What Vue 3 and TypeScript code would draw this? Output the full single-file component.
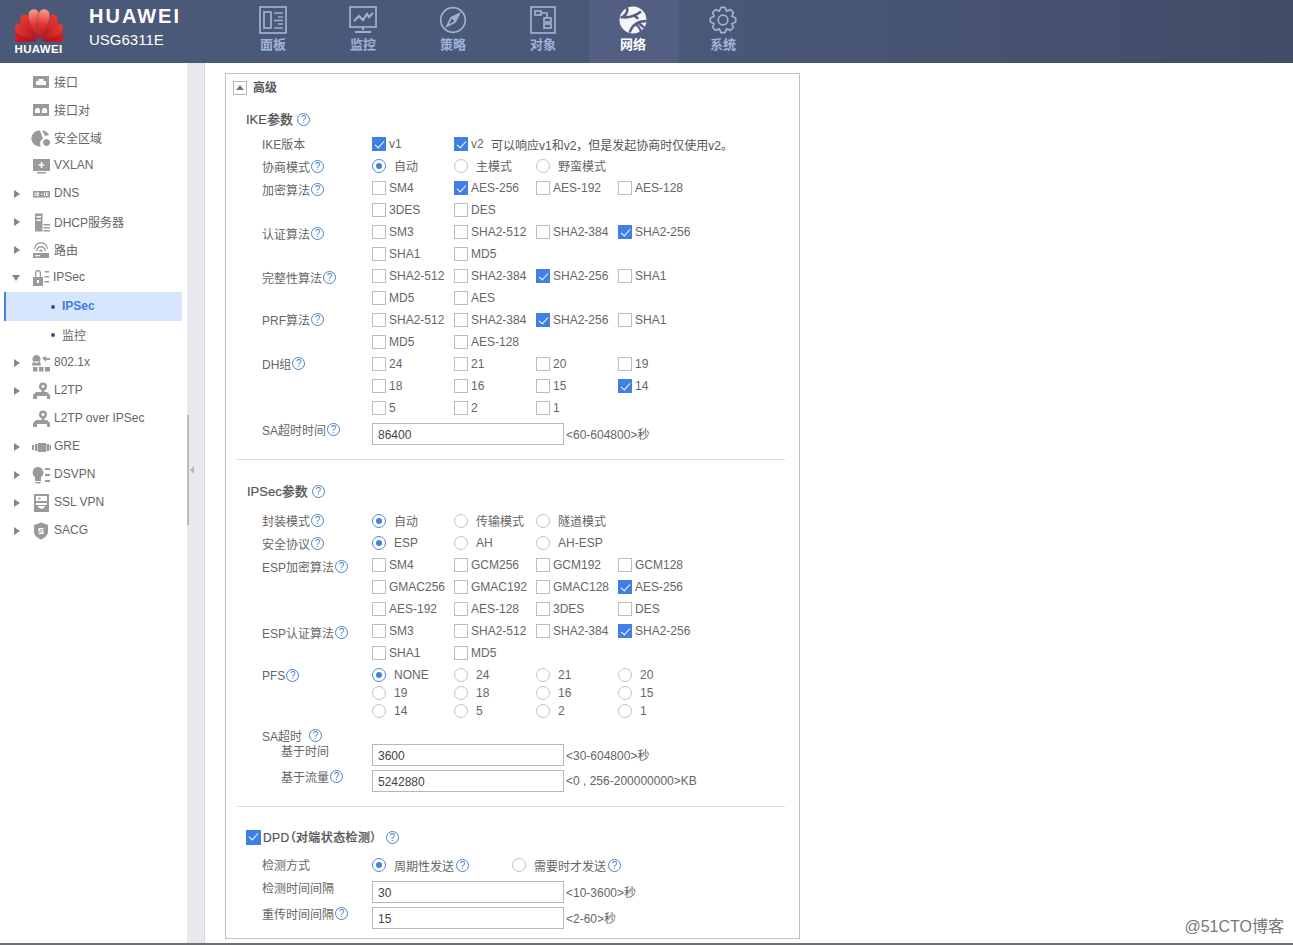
<script setup lang="ts">
type Item = { t: string; on: boolean; help?: boolean }
type Row = {
  label?: string
  help?: boolean
  h: number
  mt: number
  kind: 'c' | 'r' | 'i' | 'l'
  items?: Item[]
  value?: string
  suffix?: string
  note?: string
  cls?: string
}

const parse = (s: string): Item[] =>
  s.split(' ').map((x) => ({ t: x.replace('*', ''), on: x.includes('*') }))

const ck = (label: string | undefined, s: string, cls = ''): Row => ({ label, help: !!label, h: 22, mt: 0, kind: 'c', items: parse(s), cls })
const rd = (label: string | undefined, s: string, h = 22, mt = 0, cls = ''): Row => ({ label, help: !!label, h, mt, kind: 'r', items: parse(s), cls })
const inp = (label: string, help: boolean, value: string, suffix: string, mt: number, cls = ''): Row => ({ label, help, h: 22, mt, kind: 'i', value, suffix, cls })

const ike: Row[] = [
  { label: 'IKE版本', help: false, h: 22, mt: 0, kind: 'c', items: parse('v1* v2*'), note: '可以响应v1和v2，但是发起协商时仅使用v2。', cls: 'flat' },
  rd('协商模式', '自动* 主模式 野蛮模式', 22, 0, 'up'),
  ck('加密算法', 'SM4 AES-256* AES-192 AES-128'),
  ck(undefined, '3DES DES'),
  ck('认证算法', 'SM3 SHA2-512 SHA2-384 SHA2-256*'),
  ck(undefined, 'SHA1 MD5'),
  ck('完整性算法', 'SHA2-512 SHA2-384 SHA2-256* SHA1'),
  ck(undefined, 'MD5 AES'),
  ck('PRF算法', 'SHA2-512 SHA2-384 SHA2-256* SHA1', 'flat'),
  ck(undefined, 'MD5 AES-128'),
  ck('DH组', '24 21 20 19', 'flat'),
  ck(undefined, '18 16 15 14*'),
  ck(undefined, '5 2 1'),
  inp('SA超时时间', true, '86400', '<60-604800>秒', 4),
]

const ipsec: Row[] = [
  rd('封装模式', '自动* 传输模式 隧道模式', 22, 0, 'flat up'),
  rd('安全协议', 'ESP* AH AH-ESP'),
  ck('ESP加密算法', 'SM4 GCM256 GCM192 GCM128'),
  ck(undefined, 'GMAC256 GMAC192 GMAC128 AES-256*'),
  ck(undefined, 'AES-192 AES-128 3DES DES'),
  ck('ESP认证算法', 'SM3 SHA2-512 SHA2-384 SHA2-256*'),
  ck(undefined, 'SHA1 MD5'),
  rd('PFS', 'NONE* 24 21 20', 18, 2),
  rd(undefined, '19 18 16 15', 18),
  rd(undefined, '14 5 2 1', 18),
  { label: 'SA超时', help: true, h: 18, mt: 6, kind: 'l', cls: 'wide-help' },
  inp('基于时间', false, '3600', '<30-604800>秒', 0, 'indent'),
  inp('基于流量', true, '5242880', '<0 , 256-200000000>KB', 4, 'indent'),
]

const dpd: Row[] = [
  {
    label: '检测方式',
    help: false,
    h: 22,
    mt: 0,
    kind: 'r',
    cls: 'wide-cell flat',
    items: [
      { t: '周期性发送', on: true, help: true },
      { t: '需要时才发送', on: false, help: true },
    ],
  },
  inp('检测时间间隔', false, '30', '<10-3600>秒', 5),
  inp('重传时间间隔', true, '15', '<2-60>秒', 4),
]

const sections = [
  { title: 'IKE参数', rows: ike, cls: 'first', check: false },
  { title: 'IPSec参数', rows: ipsec, cls: 'second', check: false },
  { title: 'DPD（对端状态检测）', rows: dpd, cls: 'third', check: true },
]

const nav = [
  { t: '面板', k: 'board' },
  { t: '监控', k: 'monitor' },
  { t: '策略', k: 'policy' },
  { t: '对象', k: 'object' },
  { t: '网络', k: 'network', active: true },
  { t: '系统', k: 'system' },
]

const gearPath = (() => {
  const cx = 14, cy = 14, n = 8
  const pts: string[] = []
  for (let i = 0; i < n; i++) {
    const a = (i * 2 * Math.PI) / n - Math.PI / 2
    const step = (2 * Math.PI) / n
    const seq: [number, number][] = [
      [9.6, a - step * 0.5],
      [12.8, a - step * 0.2],
      [12.8, a + step * 0.2],
      [9.6, a + step * 0.5],
    ]
    for (const [r, t] of seq) pts.push(`${(cx + r * Math.cos(t)).toFixed(2)} ${(cy + r * Math.sin(t)).toFixed(2)}`)
  }
  return 'M' + pts.join('L') + 'Z'
})()

const petals = [
  { r: -80, s: 0.86, c: 'url(#petalLow)' },
  { r: 80, s: 0.86, c: 'url(#petalLow)' },
  { r: -57, s: 0.94, c: 'url(#petalMid)' },
  { r: 57, s: 0.94, c: 'url(#petalMid)' },
  { r: -33, s: 1.02, c: 'url(#petalMid)' },
  { r: 33, s: 1.02, c: 'url(#petalMid)' },
  { r: -11, s: 1.08, c: 'url(#petalTop)' },
  { r: 11, s: 1.08, c: 'url(#petalTop)' },
]

const icons: Record<string, string> = {
  port: 'M2 4h16v12H2zM5 13h10V9h-2.500V7h-5v2H5z',
  pair: 'M2 4h16v12H2zM4 13h5v-3L8 8H5L4 10zM11 13h5v-3l-1-2h-3l-1 2z',
  zone: 'M9 2.500a8 8 0 1 0 1 15.800 5.500 5.500 0 0 1 2-7.800zM11 2.500 14 8l4-1a8 8 0 0 0-7-4.500zM15.500 11a3.500 3.500 0 1 0 .01 0z',
  vxlan: 'M2 3h17v12H2zM9.700 6v2.200H7.500v1.600h2.200V12h1.600V9.800h2.200V8.200h-2.200V6zM6 16h9v1.500H6z',
  dns: 'M2 7h17v6.500H2zM3.500 8.500v3.500h1V8.500zM5.500 8.500v3.500h2.500v-1H6.500v-.7H8V8.500zM10 9.800v1h1.500v-1zM13 8.500v3.500h1V8.500zM15 8.500v3.500h2.500v-1H16V9.500h1.500v-1z',
  dhcp: 'M4 1.500h7.500v18H4zM5.500 4v1.500h4.500V4zM5.500 7.500v1.500h4.500V7.500zM12.500 12h6.500v1.500h-6.500zM12.500 15h6.500v1.500h-6.500zM12.500 18h6.500v1.500h-6.500z',
  route: 'M2 13h16v5H2zM4 15.200v1h5v-1zM5 11a5 5 0 0 1 10 0h-1.500a3.500 3.500 0 0 0-7 0zM3 9a7 7 0 0 1 14 0h-1.300a5.700 5.700 0 0 0-11.400 0zM8 11.500a2 2 0 0 1 4 0z',
  lock: 'M3 9h10v9H3zM5 9V5a3 3 0 0 1 6 0v4H9.700V5a1.700 1.700 0 0 0-3.400 0v4zM7 12v3h2v-3zM14.500 3H19v1.500h-4.500zM14.500 8H19v1.500h-4.500zM14.500 13H19v1.500h-4.500z',
  dot1x: 'M5.500 2a4 4 0 1 1-.01 0zM2 8.500h7l1 4H1zM11 5l4-2v2h4v2h-4v2zM2 14h4.500v4.500H2zM8 14h4.500v4.500H8zM14 14h5v4.500h-5z',
  l2tp: 'M12 1.500a4 4 0 0 1 1.500 7.700V11H16l3 3v4h-3v-3H6v3H2v-4l3-3h5.500V9.200A4 4 0 0 1 12 1.500zM12 4a1.500 1.500 0 1 0 .01 0z',
  gre: 'M1 8h2v5H1zM4 7h2.500v7H4zM7 6h8v9H7zM15.500 7H18v7h-2.500zM18.500 8h1.500v5h-1.500z',
  dsvpn: 'M7 2a5.500 5.500 0 0 1 3 10v4H4v-4A5.500 5.500 0 0 1 7 2zM4.500 17h5v1.500h-5zM14 3h5v2h-5zM14 9h5v2h-5zM14 15h5v2h-5z',
  ssl: 'M3 1h15v18H3zM5 3v5h11V3zM7.500 4.500h2v2h-2zM5 10v2h11v-2zM7 14l3.500 2 3.500-2v-1H7z',
  sacg: 'M10 1.500 17 4v6.500c0 4-3.500 6.500-7 8-3.500-1.500-7-4-7-8V4zM7.500 7v3.500h3.500v1H7.500V13H12.500V9.500H9V8.500h3.500V7z',
}

const menu = [
  { t: '接口', i: 'port' },
  { t: '接口对', i: 'pair' },
  { t: '安全区域', i: 'zone' },
  { t: 'VXLAN', i: 'vxlan' },
  { t: 'DNS', i: 'dns', caret: 'r' },
  { t: 'DHCP服务器', i: 'dhcp', caret: 'r' },
  { t: '路由', i: 'route', caret: 'r' },
  { t: 'IPSec', i: 'lock', caret: 'd' },
  { t: 'IPSec', sub: true, active: true },
  { t: '监控', sub: true },
  { t: '802.1x', i: 'dot1x', caret: 'r' },
  { t: 'L2TP', i: 'l2tp', caret: 'r' },
  { t: 'L2TP over IPSec', i: 'l2tp' },
  { t: 'GRE', i: 'gre', caret: 'r' },
  { t: 'DSVPN', i: 'dsvpn', caret: 'r' },
  { t: 'SSL VPN', i: 'ssl', caret: 'r' },
  { t: 'SACG', i: 'sacg', caret: 'r' },
]
</script>

<template>
  <div class="page">
    <header class="topbar">
      <div class="logo">
        <svg class="logo-mark" viewBox="0 0 48 36" width="48" height="36">
          <defs>
            <linearGradient id="petalTop" x1="0" y1="0" x2="0" y2="1">
              <stop offset="0" stop-color="#f7a08c" />
              <stop offset="0.5" stop-color="#e8322c" />
              <stop offset="1" stop-color="#c00d14" />
            </linearGradient>
            <linearGradient id="petalMid" x1="0" y1="0" x2="0" y2="1">
              <stop offset="0" stop-color="#ee3a30" />
              <stop offset="1" stop-color="#b80b12" />
            </linearGradient>
            <linearGradient id="petalLow" x1="0" y1="0" x2="0" y2="1">
              <stop offset="0" stop-color="#dc1c1f" />
              <stop offset="1" stop-color="#a80a10" />
            </linearGradient>
          </defs>
          <g v-for="(p, i) in petals" :key="i" :transform="`translate(24 35) rotate(${p.r}) scale(${p.s})`">
            <path d="M0 -1C-1.500 -9 -8.500 -19 -4.500 -27.500C-2.500 -31 2.500 -31 4.500 -27.500C8.500 -19 1.500 -9 0 -1Z" :fill="p.c" stroke="#4b5979" stroke-width="0.500" />
          </g>
        </svg>
        <span class="logo-word">HUAWEI</span>
      </div>
      <div class="device">
        <div class="brand">HUAWEI</div>
        <div class="model">USG6311E</div>
      </div>
      <nav class="nav">
        <div v-for="n in nav" :key="n.k" class="nav-item" :class="{ active: n.active }">
          <svg class="nav-icon" viewBox="0 0 28 28" width="28" height="28" fill="none" stroke="currentColor" stroke-width="1.700">
            <template v-if="n.k === 'board'">
              <rect x="1" y="1" width="26" height="26" />
              <rect x="5" y="6" width="7" height="16" />
              <path d="M15 7h9M19 11h5M15 14.500h9M19 18h5M15 22h9" />
            </template>
            <template v-else-if="n.k === 'monitor'">
              <rect x="1" y="1" width="26" height="20" />
              <path d="M5 15l5-5 4 4 4-6 2 3 4-4" stroke-width="2.200" />
              <path d="M14 21v3M6 26h16" stroke-width="2.200" />
            </template>
            <template v-else-if="n.k === 'policy'">
              <circle cx="14" cy="14" r="12.300" />
              <path d="M20 8 16 16 8 20 12 12Z" />
              <path d="M20 8 12 12 16 16Z" fill="currentColor" stroke="none" />
            </template>
            <template v-else-if="n.k === 'object'">
              <rect x="2" y="1" width="24" height="26" />
              <rect x="6" y="5" width="6" height="4" />
              <rect x="15" y="12" width="7" height="4" />
              <rect x="15" y="18" width="7" height="4" />
              <path d="M12 7h6v5" />
            </template>
            <template v-else-if="n.k === 'network'">
              <circle cx="14" cy="14" r="13.500" fill="#f4f5f8" stroke="none" />
              <path d="M8 1.500C9 5 8 8 4 10.500M1.500 11C8 12 15 11 22 5.500M14 9c2 1 4 2 5 4" stroke="#535f82" stroke-width="2.600" />
              <path d="M27.500 15C21 15 14 17 10.500 26.500M16 18c2 1 5 4 6 8M19 16.500l6 5" stroke="#535f82" stroke-width="2.300" />
            </template>
            <template v-else>
              <path :d="gearPath" stroke-linejoin="round" />
              <circle cx="14" cy="14" r="4.800" />
            </template>
          </svg>
          <span class="nav-text">{{ n.t }}</span>
        </div>
      </nav>
    </header>

    <main class="body">
      <aside class="sidebar">
        <div v-for="(m, i) in menu" :key="i" class="menu-row" :class="{ sub: m.sub, active: m.active }">
          <template v-if="m.sub">
            <span class="bullet"></span>
            <span class="menu-text">{{ m.t }}</span>
          </template>
          <template v-else>
            <span class="caret" :class="m.caret"></span>
            <svg class="menu-icon" viewBox="0 0 20 20" width="20" height="20">
              <path :d="icons[m.i as string]" fill="#9a9a9a" fill-rule="evenodd" />
            </svg>
            <span class="menu-text">{{ m.t }}</span>
          </template>
        </div>
      </aside>

      <div class="splitter">
        <span class="thumb"></span>
        <span class="grip"></span>
      </div>

      <section class="content">
        <div class="panel">
          <div class="panel-head">
            <span class="toggle"></span>
            <span class="panel-title">高级</span>
          </div>

          <div v-for="s in sections" :key="s.title" class="section" :class="s.cls">
            <div class="sec-title">
              <span v-if="s.check" class="box big on"></span>
              <span class="sec-text">{{ s.title }}</span>
              <span class="help sec-help">?</span>
            </div>

            <div
              v-for="(r, ri) in s.rows"
              :key="ri"
              class="row"
              :class="[r.cls, 'kind-' + r.kind]"
              :style="{ height: r.h + 'px', marginTop: r.mt + 'px' }"
            >
              <div class="label">
                <span>{{ r.label }}</span>
                <span v-if="r.help" class="help">?</span>
              </div>
              <template v-if="r.kind === 'i'">
                <div class="input">{{ r.value }}</div>
                <span class="suffix">{{ r.suffix }}</span>
              </template>
              <template v-else-if="r.items">
                <div v-for="it in r.items" :key="it.t" class="cell">
                  <span v-if="r.kind === 'c'" class="box" :class="{ on: it.on }"></span>
                  <span v-else class="radio" :class="{ on: it.on }"></span>
                  <span class="cell-text">{{ it.t }}</span>
                  <span v-if="it.help" class="help">?</span>
                </div>
                <span v-if="r.note" class="note">{{ r.note }}</span>
              </template>
            </div>
          </div>
        </div>
      </section>
    </main>
    <div class="footline"></div>
    <div class="watermark">@51CTO博客</div>
  </div>
</template>

<style>
html,
body {
  margin: 0;
  background: #fff;
}
</style>

<style scoped>
.page {
  position: relative;
  width: 1293px;
  height: 945px;
  overflow: hidden;
  display: flex;
  flex-direction: column;
  font-family: "Liberation Sans", "Noto Sans CJK SC", sans-serif;
  font-size: 12px;
  color: #555;
  background: #fff;
}

.topbar {
  height: 63px;
  flex: none;
  display: flex;
  background: linear-gradient(90deg, #4b5979 0%, #4b5979 50%, #414c68 100%);
}
.logo {
  width: 77px;
  flex: none;
  display: flex;
  flex-direction: column;
  align-items: center;
  box-sizing: border-box;
  padding-top: 6px;
}
.logo-mark {
  display: block;
}
.logo-word {
  margin-top: 1px;
  font-size: 11.500px;
  font-weight: 700;
  line-height: 12px;
  color: #fff;
  letter-spacing: 0.300px;
}
.device {
  width: 152px;
  flex: none;
  box-sizing: border-box;
  padding: 6px 0 0 12px;
  color: #fff;
}
.brand {
  font-size: 20px;
  font-weight: 700;
  letter-spacing: 2px;
  line-height: 20px;
}
.model {
  margin-top: 4px;
  font-size: 15px;
  line-height: 20px;
}
.nav {
  display: flex;
}
.nav-item {
  width: 90px;
  height: 63px;
  display: flex;
  flex-direction: column;
  align-items: center;
  box-sizing: border-box;
  padding: 6px 2px 0 0;
  color: #a2b0cd;
}
.nav-item.active {
  background: #535f82;
  color: #fff;
}
.nav-icon {
  display: block;
}
.nav-text {
  margin-top: 3px;
  font-size: 13px;
  line-height: 16px;
  font-weight: 700;
  color: #9fb3d8;
}
.nav-item.active .nav-text {
  color: #fff;
}

.body {
  flex: 1;
  min-height: 0;
  display: flex;
}
.sidebar {
  width: 187px;
  flex: none;
  box-sizing: border-box;
  padding: 5px 5px 0 4px;
}
.menu-row {
  height: 28px;
  display: flex;
  align-items: center;
  color: #666;
}
.menu-text {
  margin-top: -2px;
}
.caret {
  width: 9px;
  height: 0;
  margin-left: 8px;
  flex: none;
  box-sizing: border-box;
}
.caret.r {
  width: 0;
  margin-right: 9px;
  border-left: 6px solid #7f8a8a;
  border-top: 4.500px solid transparent;
  border-bottom: 4.500px solid transparent;
  margin-left: 10px;
}
.caret.d {
  width: 0;
  margin-right: 8px;
  border-top: 6px solid #7f8a8a;
  border-left: 4.500px solid transparent;
  border-right: 4.500px solid transparent;
  margin-left: 8px;
}
.menu-row .caret:not(.r):not(.d) {
  margin-right: 8px;
}
.menu-icon {
  flex: none;
  margin: 0 3px 0 2px;
}
.menu-row.sub {
  padding-left: 47px;
}
.menu-row.active {
  height: 29px;
  box-sizing: border-box;
  background: #d8e6fd;
  border-left: 2px solid #4a84e0;
  padding-left: 45px;
  color: #3f7be0;
  font-weight: 700;
}
.bullet {
  width: 4px;
  height: 4px;
  border-radius: 50%;
  background: #3d5273;
  margin-right: 7px;
}

.splitter {
  position: relative;
  width: 18px;
  flex: none;
  box-sizing: border-box;
  background: #e8e9ee;
  border-right: 1px solid #d5d6da;
}
.thumb {
  position: absolute;
  left: 0;
  top: 352px;
  width: 2px;
  height: 110px;
  background: #bcbcbc;
}
.grip {
  position: absolute;
  left: 3px;
  top: 403px;
  width: 0;
  height: 0;
  border-right: 4px solid #b5b8bf;
  border-top: 4px solid transparent;
  border-bottom: 4px solid transparent;
}

.content {
  flex: 1;
  padding: 10px 0 0 20px;
}
.panel {
  width: 575px;
  box-sizing: border-box;
  border: 1px solid #c2c2c2;
  padding-bottom: 9px;
}
.panel-head {
  height: 28px;
  display: flex;
  align-items: center;
  padding-left: 7px;
}
.toggle {
  position: relative;
  width: 14px;
  height: 14px;
  box-sizing: border-box;
  border: 1px solid #b5b5b5;
}
.toggle::after {
  content: "";
  position: absolute;
  left: 2px;
  top: 3px;
  border-bottom: 5px solid #777;
  border-left: 4px solid transparent;
  border-right: 4px solid transparent;
}
.panel-title {
  margin: -3px 0 0 6px;
  font-size: 12px;
  font-weight: 700;
  color: #555;
}

.section.second,
.section.third {
  margin: 14px 14px 0 11px;
  border-top: 1px solid #dcdcdc;
}
.section.second .row,
.section.third .row {
  margin-left: -11px;
}
.sec-title {
  height: 20px;
  margin: 7px 0 4px;
  padding-left: 20px;
  display: flex;
  align-items: center;
  font-size: 13px;
  color: #555;
}
.sec-text {
  margin-top: -2px;
  font-weight: 500;
  -webkit-text-stroke: 0.200px #555;
}
.second .sec-title {
  margin: 21px 0 9px;
  padding-left: 10px;
}
.third .sec-title {
  margin: 20px 0 7px;
  padding-left: 9px;
}
.third .sec-text {
  font-size: 12px;
  font-feature-settings: "palt";
  letter-spacing: 0.400px;
}
.sec-title .sec-help {
  margin-left: 4px;
}
.third .sec-title .sec-help {
  margin-left: 9px;
}

.row {
  display: flex;
  align-items: center;
  white-space: nowrap;
}
.label {
  width: 146px;
  flex: none;
  box-sizing: border-box;
  padding-left: 36px;
  display: flex;
  align-items: center;
  color: #666;
}
.kind-c .label {
  padding-top: 3px;
}
.kind-r .label {
  padding-top: 1px;
}
.kind-i .label {
  padding-bottom: 10px;
}
.row.flat .label {
  padding-top: 0;
  padding-bottom: 1px;
}
.row.up .cell-text {
  padding-bottom: 2px;
}
.indent .label {
  padding-left: 55px;
}
.wide-help .label .help {
  margin-left: 7px;
}
.cell {
  width: 82px;
  flex: none;
  display: flex;
  align-items: center;
  color: #666;
}
.wide-cell .cell {
  width: 140px;
}
.box {
  width: 14px;
  height: 14px;
  flex: none;
  box-sizing: border-box;
  border: 1px solid #bdbdbd;
  background: #fff;
  margin-right: 3px;
}
.box.on {
  border: none;
  background: #3e80e6;
  position: relative;
}
.box.on::after {
  content: "";
  position: absolute;
  left: 5px;
  top: 1.500px;
  width: 4px;
  height: 8px;
  border-right: 1.600px solid #fff;
  border-bottom: 1.600px solid #fff;
  transform: rotate(42deg);
}
.box.big {
  width: 15px;
  height: 15px;
  margin-right: 2px;
}
.radio {
  position: relative;
  width: 14px;
  height: 14px;
  flex: none;
  box-sizing: border-box;
  border: 1px solid #c4c4c4;
  border-radius: 50%;
  margin-right: 8px;
  background: #fff;
}
.radio.on {
  border-color: #4a86e0;
}
.radio.on::after {
  content: "";
  position: absolute;
  left: 3px;
  top: 3px;
  width: 6px;
  height: 6px;
  border-radius: 50%;
  background: #3e80e6;
}
.note {
  margin-left: -45px;
  color: #555;
}
.help {
  width: 13px;
  height: 13px;
  flex: none;
  box-sizing: border-box;
  border: 1px solid #4a82c8;
  border-radius: 50%;
  margin-left: 1px;
  font-size: 10px;
  line-height: 11px;
  font-weight: 400;
  text-align: center;
  color: #4a82c8;
}
.cell .help {
  margin-left: 2px;
}
.input {
  width: 192px;
  height: 22px;
  flex: none;
  box-sizing: border-box;
  border: 1px solid #b8b8b8;
  padding-left: 5px;
  line-height: 22px;
  color: #444;
}
.suffix {
  margin-left: 2px;
  padding-bottom: 1px;
  color: #666;
}

.footline {
  height: 2px;
  flex: none;
  background: #6e7173;
}
.watermark {
  position: absolute;
  right: 9px;
  bottom: 8px;
  font-size: 16px;
  line-height: 20px;
  color: #777;
}
</style>
